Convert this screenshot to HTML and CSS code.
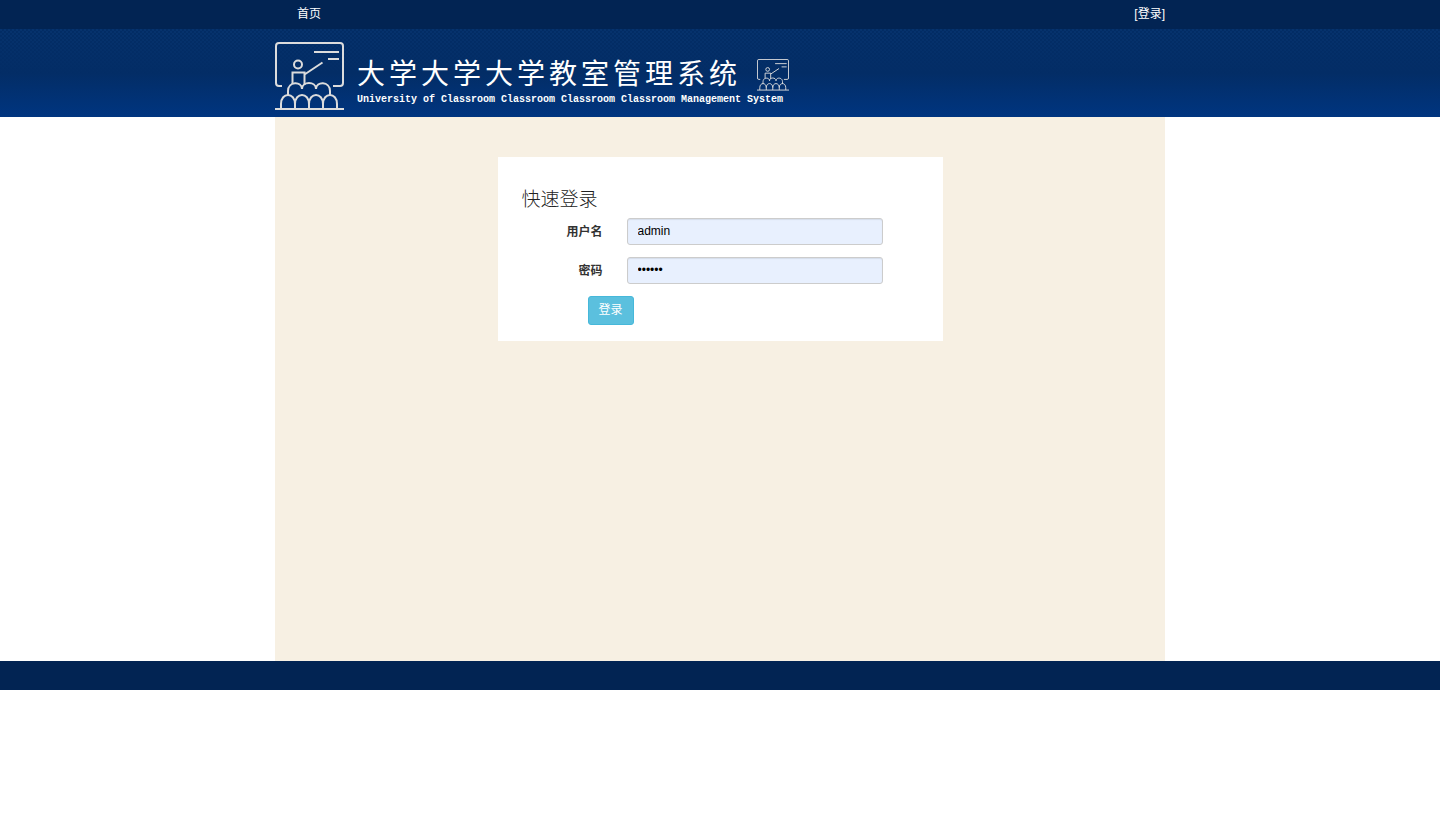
FILE: index.html
```
<!DOCTYPE html>
<html lang="zh-CN">
<head>
  <meta charset="UTF-8">
  <meta name="viewport" content="width=device-width, initial-scale=1">
  <title>大学教室管理系统</title>
  <link rel="stylesheet" href="styles.css">
</head>
<body>
  <!-- Logo shape, used twice in the banner -->
  <svg class="sprite" aria-hidden="true">
    <symbol id="classroom" viewBox="0 0 69 69">
      <path d="M7 44H4a3 3 0 0 1-3-3V4a3 3 0 0 1 3-3h61a3 3 0 0 1 3 3v37a3 3 0 0 1-3 3h-7"/>
      <path d="M39 10h25M53 17h11"/>
      <circle cx="23" cy="22.500" r="4"/>
      <path d="M17.500 42V30.500H29.500V43M29.500 32.500L47.500 20.500"/>
      <path d="M13 54V49C13 39 27 39 27 47C27 39 41 39 41 47C41 39 55 39 55 49V54"/>
      <path d="M6 67V62C6 50 20 50 20 62V67M20 62C20 50 34 50 34 62V67M34 62C34 50 48 50 48 62V67M48 62C48 50 62 50 62 62V67"/>
      <path d="M0 67H69"/>
    </symbol>
  </svg>

  <!-- Top bar -->
  <nav class="topbar">
    <div class="container topbar-inner">
      <a class="home-link" href="#">首页</a>
      <a href="#">[登录]</a>
    </div>
  </nav>

  <!-- Banner -->
  <header class="banner">
    <div class="container banner-inner">
      <svg class="logo" aria-hidden="true"><use href="#classroom"/></svg>
      <div class="brand">
        <div class="brand-row">
          <h1>大学大学大学教室管理系统</h1>
          <svg class="logo-small" aria-hidden="true"><use href="#classroom"/></svg>
        </div>
        <p>University of Classroom Classroom Classroom Classroom Management System</p>
      </div>
    </div>
  </header>

  <!-- Login -->
  <main class="container content">
    <form class="login-box">
      <h2>快速登录</h2>
      <div class="form-group">
        <label for="username">用户名</label>
        <input type="text" id="username" name="username" value="admin">
      </div>
      <div class="form-group">
        <label for="password">密码</label>
        <input type="password" id="password" name="password" value="123456">
      </div>
      <button type="submit">登录</button>
    </form>
  </main>

  <footer class="footer"></footer>
</body>
</html>
```

FILE: styles.css
```
* {
  box-sizing: border-box;
}

body {
  margin: 0;
  background: #fff;
  color: #333;
  font-family: "Liberation Sans", "Noto Sans CJK SC", sans-serif;
  font-size: 12px;
  line-height: 18px;
}

.sprite {
  position: absolute;
  width: 0;
  height: 0;
}

.container {
  width: 100%;
  max-width: 890px;
  margin: 0 auto;
}

/* Top bar */
.topbar {
  background: #022453;
}

.topbar-inner {
  display: flex;
  justify-content: space-between;
  align-items: center;
  height: 29px;
  padding: 0 0 1px 22px;
}

.topbar a {
  color: #fff;
  text-decoration: none;
}

/* Banner */
.banner {
  background:
    linear-gradient(rgba(3, 45, 102, 0.2), #032d66 50%, #003580),
    repeating-conic-gradient(#022c64 0 25%, #07346f 0 50%) 0 0 / 4px 4px;
  color: #fff;
}

.banner-inner {
  display: flex;
  gap: 13px;
  padding: 13px 0 6px;
}

.logo,
.logo-small {
  flex: none;
  fill: none;
  stroke: #dcdcdc;
  stroke-width: 2;
}

.logo {
  width: 69px;
  height: 69px;
}

.logo-small {
  width: 32px;
  height: 32px;
}

.brand {
  padding-top: 16px;
}

.brand-row {
  display: flex;
  align-items: center;
  gap: 16px;
}

.brand h1 {
  margin: 0;
  font-size: 28px;
  font-weight: 400;
  line-height: 34px;
  letter-spacing: 4px;
}

.brand p {
  margin: 1px 0 0;
  font-family: "Liberation Mono", monospace;
  font-size: 10px;
  font-weight: 700;
  line-height: 14px;
}

/* Login */
.content {
  min-height: 544px;
  padding-top: 40px;
  background: #f7f0e3;
}

.login-box {
  width: 50%;
  margin: 0 auto;
  padding: 31px 24px 16px;
  background: #fff;
}

.login-box h2 {
  margin: 0 0 6px;
  color: #222;
  font-size: 19px;
  font-weight: 300;
  line-height: 24px;
}

.form-group {
  display: flex;
  align-items: center;
  gap: 24px;
  margin-bottom: 12px;
}

.form-group label {
  width: 81px;
  font-weight: 700;
  text-align: right;
}

.form-group input {
  width: 256px;
  height: 27px;
  padding: 3px 10px 5px;
  border: 1px solid #ccc;
  border-radius: 3px;
  background: #e8f0fe;
  box-shadow: inset 0 1px 1px rgba(0, 0, 0, 0.08);
  color: #000;
  font-family: inherit;
  font-size: 12px;
}

.login-box button {
  display: block;
  margin-left: 66px;
  padding: 5px 10px;
  border: 1px solid #46b8da;
  border-radius: 3px;
  background: #5bc0de;
  color: #fff;
  font-family: inherit;
  font-size: 12px;
  line-height: 17px;
}

.footer {
  height: 29px;
  background: #022453;
}
```
